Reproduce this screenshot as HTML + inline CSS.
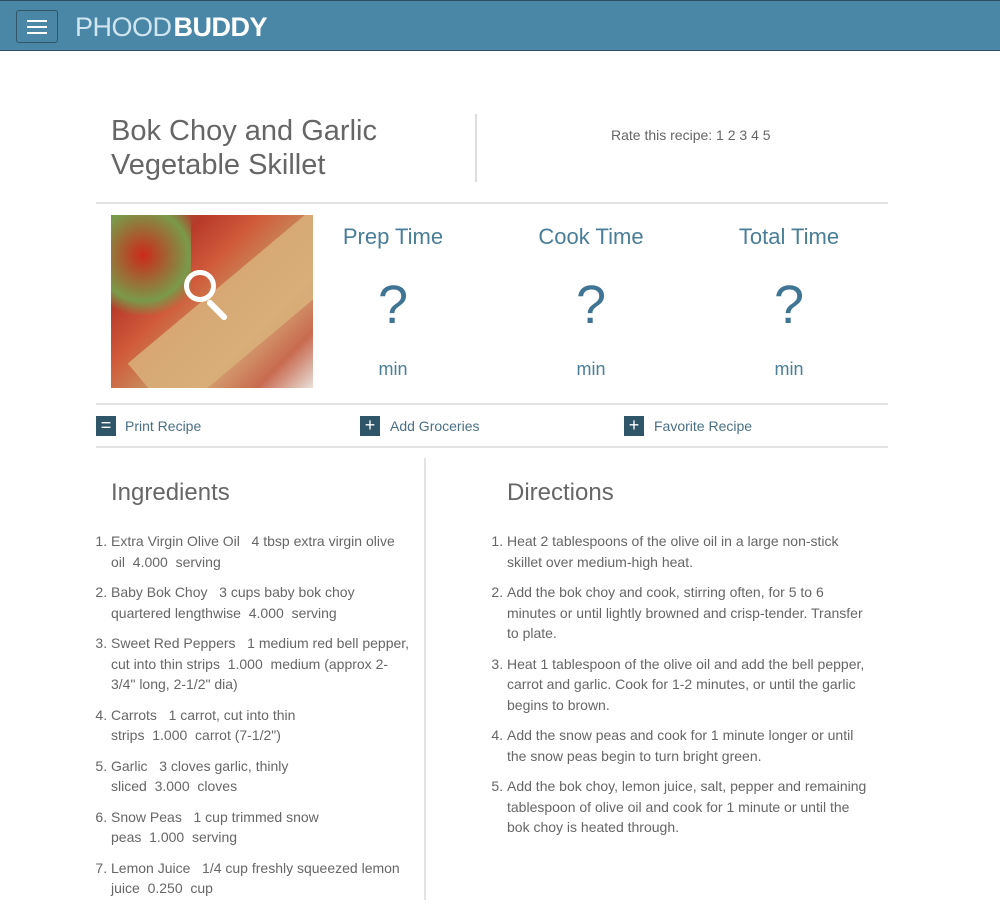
<!DOCTYPE html>
<html><head><style>
body{margin:0;background:#fff;font-family:"Liberation Sans",sans-serif;color:#666;width:1000px;height:900px;overflow:hidden;position:relative}
.hdr{position:absolute;left:0;top:0;width:1000px;height:51px;background:#4a87a6;border-bottom:1px solid #2b4e60;border-top:1px solid #2b4e60;box-sizing:border-box}
.burger{position:absolute;left:16px;top:9px;width:42px;height:33px;border:1px solid #2f5567;border-radius:3px;box-sizing:border-box}
.burger i{position:absolute;left:10px;width:20px;height:2px;background:#fff}
.logo{position:absolute;left:75px;top:11px;font-size:27px;color:#cfe6f0;letter-spacing:-0.5px}
.logo b{color:#fff;margin-left:2px}
.a{position:absolute}
.hr{position:absolute;left:96px;width:792px;height:2px;background:#e3e3e3}
.tt{font-size:22px;color:#4a7e98;text-align:center;width:160px}
.q{font-size:54px;color:#3f7593;text-align:center;width:160px}
.mn{font-size:18px;color:#4a7e98;text-align:center;width:160px}
.btn{position:absolute;width:20px;height:20px;background:#2f5568;color:#fff;text-align:center;line-height:19px;font-size:18px}
.lk{position:absolute;font-size:14px;color:#4a6f85}
ol{position:absolute;margin:0;padding-left:16px;font-size:14px;line-height:20.5px;color:#666}
ol li{margin-bottom:10px;padding-left:0}
h2{position:absolute;margin:0;font-weight:normal;font-size:24px;color:#666}
</style></head><body>
<div class="hdr"><div class="burger"><i style="top:9px"></i><i style="top:15px"></i><i style="top:21px"></i></div>
<div class="logo">PHOOD<b>BUDDY</b></div></div>
<div class="a" style="left:111px;top:114px;font-size:29px;line-height:34px;color:#666">Bok Choy and Garlic<br>Vegetable Skillet</div>
<div class="a" style="left:475px;top:114px;width:2px;height:68px;background:#ddd"></div>
<div class="a" style="left:611px;top:127px;font-size:14px;color:#666">Rate this recipe: 1 2 3 4 5</div>
<div class="hr" style="top:202px"></div>
<div class="a" style="left:111px;top:215px;width:202px;height:173px;overflow:hidden;background:linear-gradient(135deg,#6a8a4a 0%,#b83a2a 25%,#d05a3a 40%,#c88a5a 55%,#d4a070 70%,#c86a50 85%,#e8e0d8 100%)">
<div style="position:absolute;left:0;top:0;width:80px;height:100px;background:radial-gradient(circle at 40% 40%,#cc2a1a,#7a9a4a 60%,transparent 80%)"></div>
<div style="position:absolute;left:10px;top:60px;width:250px;height:70px;transform:rotate(-40deg);background:#d9b07a;opacity:.85"></div>
<div style="position:absolute;left:73px;top:55px;width:32px;height:32px;border:5px solid #fff;border-radius:50%;box-sizing:border-box"></div>
<div style="position:absolute;left:103px;top:82px;width:6px;height:26px;background:#fff;transform:rotate(-45deg);border-radius:3px"></div>
</div>
<div class="a tt" style="left:313px;top:224px">Prep Time</div>
<div class="a tt" style="left:511px;top:224px">Cook Time</div>
<div class="a tt" style="left:709px;top:224px">Total Time</div>
<div class="a q" style="left:313px;top:274px">?</div>
<div class="a q" style="left:511px;top:274px">?</div>
<div class="a q" style="left:709px;top:274px">?</div>
<div class="a mn" style="left:313px;top:359px">min</div>
<div class="a mn" style="left:511px;top:359px">min</div>
<div class="a mn" style="left:709px;top:359px">min</div>
<div class="hr" style="top:403px"></div>
<div class="btn" style="left:96px;top:416px">=</div><div class="lk" style="left:125px;top:418px">Print Recipe</div>
<div class="btn" style="left:360px;top:416px">+</div><div class="lk" style="left:390px;top:418px">Add Groceries</div>
<div class="btn" style="left:624px;top:416px">+</div><div class="lk" style="left:654px;top:418px">Favorite Recipe</div>
<div class="hr" style="top:446px"></div>
<div class="a" style="left:424px;top:458px;width:2px;height:442px;background:#e3e3e3"></div>
<h2 style="left:111px;top:479px">Ingredients</h2>
<h2 style="left:507px;top:479px">Directions</h2>
<ol style="left:95px;top:531px;width:300px">
<li>Extra Virgin Olive Oil &nbsp; 4 tbsp extra virgin olive oil &nbsp;4.000 &nbsp;serving</li>
<li>Baby Bok Choy &nbsp; 3 cups baby bok choy quartered lengthwise &nbsp;4.000 &nbsp;serving</li>
<li>Sweet Red Peppers &nbsp; 1 medium red bell pepper, cut into thin strips &nbsp;1.000 &nbsp;medium (approx 2-3/4" long, 2-1/2" dia)</li>
<li style="width:200px">Carrots &nbsp; 1 carrot, cut into thin strips &nbsp;1.000 &nbsp;carrot (7-1/2")</li>
<li style="width:190px">Garlic &nbsp; 3 cloves garlic, thinly sliced &nbsp;3.000 &nbsp;cloves</li>
<li style="width:210px">Snow Peas &nbsp; 1 cup trimmed snow peas &nbsp;1.000 &nbsp;serving</li>
<li>Lemon Juice &nbsp; 1/4 cup freshly squeezed lemon juice &nbsp;0.250 &nbsp;cup</li>
</ol>
<ol style="left:491px;top:531px;width:365px">
<li>Heat 2 tablespoons of the olive oil in a large non-stick skillet over medium-high heat.</li>
<li>Add the bok choy and cook, stirring often, for 5 to 6 minutes or until lightly browned and crisp-tender. Transfer to plate.</li>
<li>Heat 1 tablespoon of the olive oil and add the bell pepper, carrot and garlic. Cook for 1-2 minutes, or until the garlic begins to brown.</li>
<li>Add the snow peas and cook for 1 minute longer or until the snow peas begin to turn bright green.</li>
<li>Add the bok choy, lemon juice, salt, pepper and remaining tablespoon of olive oil and cook for 1 minute or until the bok choy is heated through.</li>
</ol>
</body></html>
